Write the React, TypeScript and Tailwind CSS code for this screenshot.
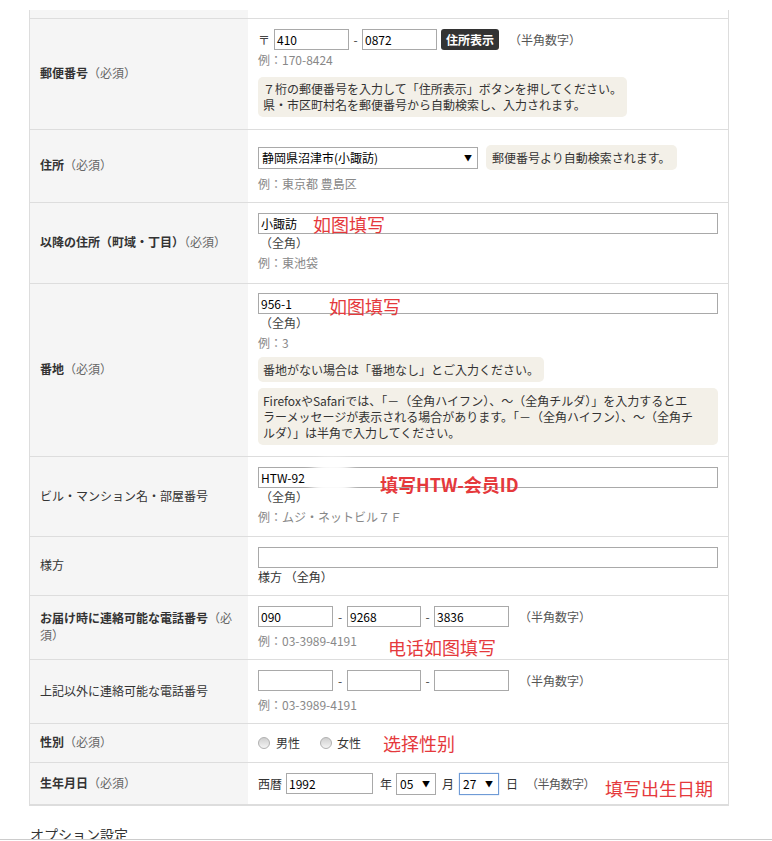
import React from "react";

const red = "font-['Noto_Sans_CJK_SC',sans-serif] text-[#e5393c] text-[18px] leading-none whitespace-nowrap";

const Label = ({ main, req = true, bold = true }: { main: string; req?: boolean; bold?: boolean }) => (
  <span>
    <span className={bold ? "font-bold text-[#333]" : "text-[#333]"}>{main}</span>
    {req && <span className="text-[#666]">（必須）</span>}
  </span>
);

const Input = ({ w, value = "" }: { w: string; value?: string }) => (
  <div className={`${w} shrink-0 h-[21px] border border-[#a9a9a9] bg-white pl-[2px] flex items-center text-[12px] text-black`}>
    {value}
  </div>
);

const Select = ({ w, value, focus = false }: { w: string; value: string; focus?: boolean }) => (
  <div
    className={`${w} shrink-0 h-[22px] border bg-white flex items-center justify-between pl-[3px] pr-[5px] text-[12px] text-black ${
      focus ? "border-[#6f9bd6] shadow-[0_0_1px_#8fb4e6]" : "border-[#a9a9a9]"
    }`}
  >
    <span>{value}</span>
    <span className="text-[8px]">▼</span>
  </div>
);

const Note = ({ children, className = "" }: { children: React.ReactNode; className?: string }) => (
  <div className={`bg-[#f3f0e8] rounded-[5px] px-[5px] text-[12px] text-[#333] leading-[16px] whitespace-nowrap ${className}`}>
    {children}
  </div>
);

const Ex = ({ children, className = "" }: { children: React.ReactNode; className?: string }) => (
  <div className={`text-[12px] leading-[18px] text-[#888] ${className}`}>{children}</div>
);

const Row = ({
  h,
  label,
  pad = "",
  children,
}: {
  h: string;
  label: React.ReactNode;
  pad?: string;
  children?: React.ReactNode;
}) => (
  <div className={`flex border-b border-[#dddddd] ${h}`}>
    <div className="w-[218px] shrink-0 bg-[#f5f5f5] flex items-center pl-[10px] pr-[12px] pb-[3px] text-[12px] leading-[17px]">
      {label}
    </div>
    <div className={`relative flex-1 min-w-0 px-[10px] text-[12px] text-[#444] ${pad}`}>{children}</div>
  </div>
);

export default function App() {
  return (
    <div className="w-[772px] h-[841px] overflow-hidden bg-white font-['Noto_Sans_CJK_JP',sans-serif] text-[#333]">
      <div className="ml-[29px] mt-[10px] w-[700px] border-x border-b border-[#dddddd]">
        <div className="flex h-[9px] border-b border-[#dddddd]">
          <div className="w-[218px] bg-[#f5f5f5]" />
        </div>

        <Row h="h-[111px]" pad="pt-[10px]" label={<Label main="郵便番号" />}>
          <div className="flex items-center h-[21px] text-[12px]">
            <span className="mr-[4px]">〒</span>
            <Input w="w-[75px]" value="410" />
            <span className="w-[13px] text-center">-</span>
            <Input w="w-[75px]" value="0872" />
            <span className="ml-[4px] h-[21px] px-[5px] bg-[#333] text-white font-bold rounded-[3px] flex items-center">
              住所表示
            </span>
            <span className="ml-[10px] text-[#555]">（半角数字）</span>
          </div>
          <Ex className="mt-[1px]">例：170-8424</Ex>
          <Note className="inline-block mt-[8px] py-[4px]">
            ７桁の郵便番号を入力して「住所表示」ボタンを押してください。
            <br />
            県・市区町村名を郵便番号から自動検索し、入力されます。
          </Note>
        </Row>

        <Row h="h-[73px]" pad="pt-[15px]" label={<Label main="住所" />}>
          <div className="flex items-center">
            <Select w="w-[220px]" value="静岡県沼津市(小諏訪)" />
            <Note className="ml-[8px] px-[6px] py-[4px] leading-[17px]">郵便番号より自動検索されます。</Note>
          </div>
          <Ex className="mt-[5px]">例：東京都 豊島区</Ex>
        </Row>

        <Row h="h-[81px]" pad="pt-[10px]" label={<Label main="以降の住所（町域・丁目）" />}>
          <Input w="w-[460px]" value="小諏訪" />
          <div className="leading-[18px] pl-[2px]">（全角）</div>
          <Ex className="mt-[2px]">例：東池袋</Ex>
          <span className={`absolute left-[65px] top-[12px] ${red}`}>如图填写</span>
        </Row>

        <Row h="h-[173px]" pad="pt-[9px]" label={<Label main="番地" />}>
          <Input w="w-[460px]" value="956-1" />
          <div className="leading-[18px] pl-[2px]">（全角）</div>
          <Ex className="mt-[2px]">例：3</Ex>
          <Note className="inline-block mt-[5px] pt-[5px] pb-[4px]">番地がない場合は「番地なし」とご入力ください。</Note>
          <Note className="mt-[6px] pt-[5px] pb-[4px]">
            FirefoxやSafariでは、「－（全角ハイフン）、～（全角チルダ）」を入力するとエ
            <br />
            ラーメッセージが表示される場合があります。「－（全角ハイフン）、～（全角チ
            <br />
            ルダ）」は半角で入力してください。
          </Note>
          <span className={`absolute left-[81px] top-[13px] ${red}`}>如图填写</span>
        </Row>

        <Row h="h-[80px]" pad="pt-[10px]" label={<Label main="ビル・マンション名・部屋番号" req={false} bold={false} />}>
          <Input w="w-[460px]" value="HTW-92" />
          <div className="leading-[18px] pl-[2px]">（全角）</div>
          <Ex className="mt-[2px]">例：ムジ・ネットビル７Ｆ</Ex>
          <div className="absolute left-[62px] top-[2px] w-[44px] h-[40px] rounded-full bg-white/95 blur-[5px]" />
          <span className={`absolute left-[132px] top-[18px] font-bold ${red}`}>填写HTW-会员ID</span>
        </Row>

        <Row h="h-[59px]" pad="pt-[10px]" label={<Label main="様方" req={false} bold={false} />}>
          <Input w="w-[460px]" />
          <div className="leading-[18px] text-[#333]">様方 （全角）</div>
        </Row>

        <Row h="h-[64px]" pad="pt-[10px]" label={<Label main="お届け時に連絡可能な電話番号" />}>
          <div className="flex items-center">
            <Input w="w-[75px]" value="090" />
            <span className="w-[14px] text-center">-</span>
            <Input w="w-[74px]" value="9268" />
            <span className="w-[13px] text-center">-</span>
            <Input w="w-[75px]" value="3836" />
            <span className="ml-[10px] text-[#555]">（半角数字）</span>
          </div>
          <Ex className="mt-[5px]">例：03-3989-4191</Ex>
          <span className={`absolute left-[140px] top-[42px] ${red}`}>电话如图填写</span>
        </Row>

        <Row h="h-[64px]" pad="pt-[10px]" label={<Label main="上記以外に連絡可能な電話番号" req={false} bold={false} />}>
          <div className="flex items-center">
            <Input w="w-[75px]" />
            <span className="w-[14px] text-center">-</span>
            <Input w="w-[74px]" />
            <span className="w-[13px] text-center">-</span>
            <Input w="w-[75px]" />
            <span className="ml-[10px] text-[#555]">（半角数字）</span>
          </div>
          <Ex className="mt-[5px]">例：03-3989-4191</Ex>
        </Row>

        <Row h="h-[39px]" pad="flex items-center whitespace-nowrap" label={<Label main="性別" />}>
          <span className="shrink-0 w-[12px] h-[12px] rounded-full border border-[#b0b0b0] bg-gradient-to-b from-[#cfcfcf] to-[#f4f4f4]" />
          <span className="ml-[6px] text-[#333]">男性</span>
          <span className="shrink-0 ml-[20px] w-[12px] h-[12px] rounded-full border border-[#b0b0b0] bg-gradient-to-b from-[#cfcfcf] to-[#f4f4f4]" />
          <span className="ml-[5px] text-[#333]">女性</span>
          <span className={`ml-[22px] ${red}`}>选择性别</span>
        </Row>

        <Row h="h-[42px]" pad="flex items-center whitespace-nowrap" label={<Label main="生年月日" />}>
          <span className="shrink-0 text-[#333]">西暦</span>
          <span className="shrink-0 ml-[4px]">
            <Input w="w-[87px]" value="1992" />
          </span>
          <span className="shrink-0 ml-[7px] text-[#333]">年</span>
          <span className="shrink-0 ml-[4px]">
            <Select w="w-[40px]" value="05" />
          </span>
          <span className="shrink-0 ml-[6px] text-[#333]">月</span>
          <span className="shrink-0 ml-[5px]">
            <Select w="w-[40px]" value="27" focus />
          </span>
          <span className="shrink-0 ml-[7px] text-[#333]">日</span>
          <span className="shrink-0 ml-[8px] text-[#555] tracking-[-0.5px]">（半角数字）</span>
          <span className={`shrink-0 ml-[10px] mt-[8px] ${red}`}>填写出生日期</span>
        </Row>
      </div>

      <div className="mt-[18px] ml-[30px] h-[15px] overflow-hidden text-[14px] leading-[20px] text-[#333]">オプション設定</div>
      <div className="border-t border-[#cccccc]" />
    </div>
  );
}
